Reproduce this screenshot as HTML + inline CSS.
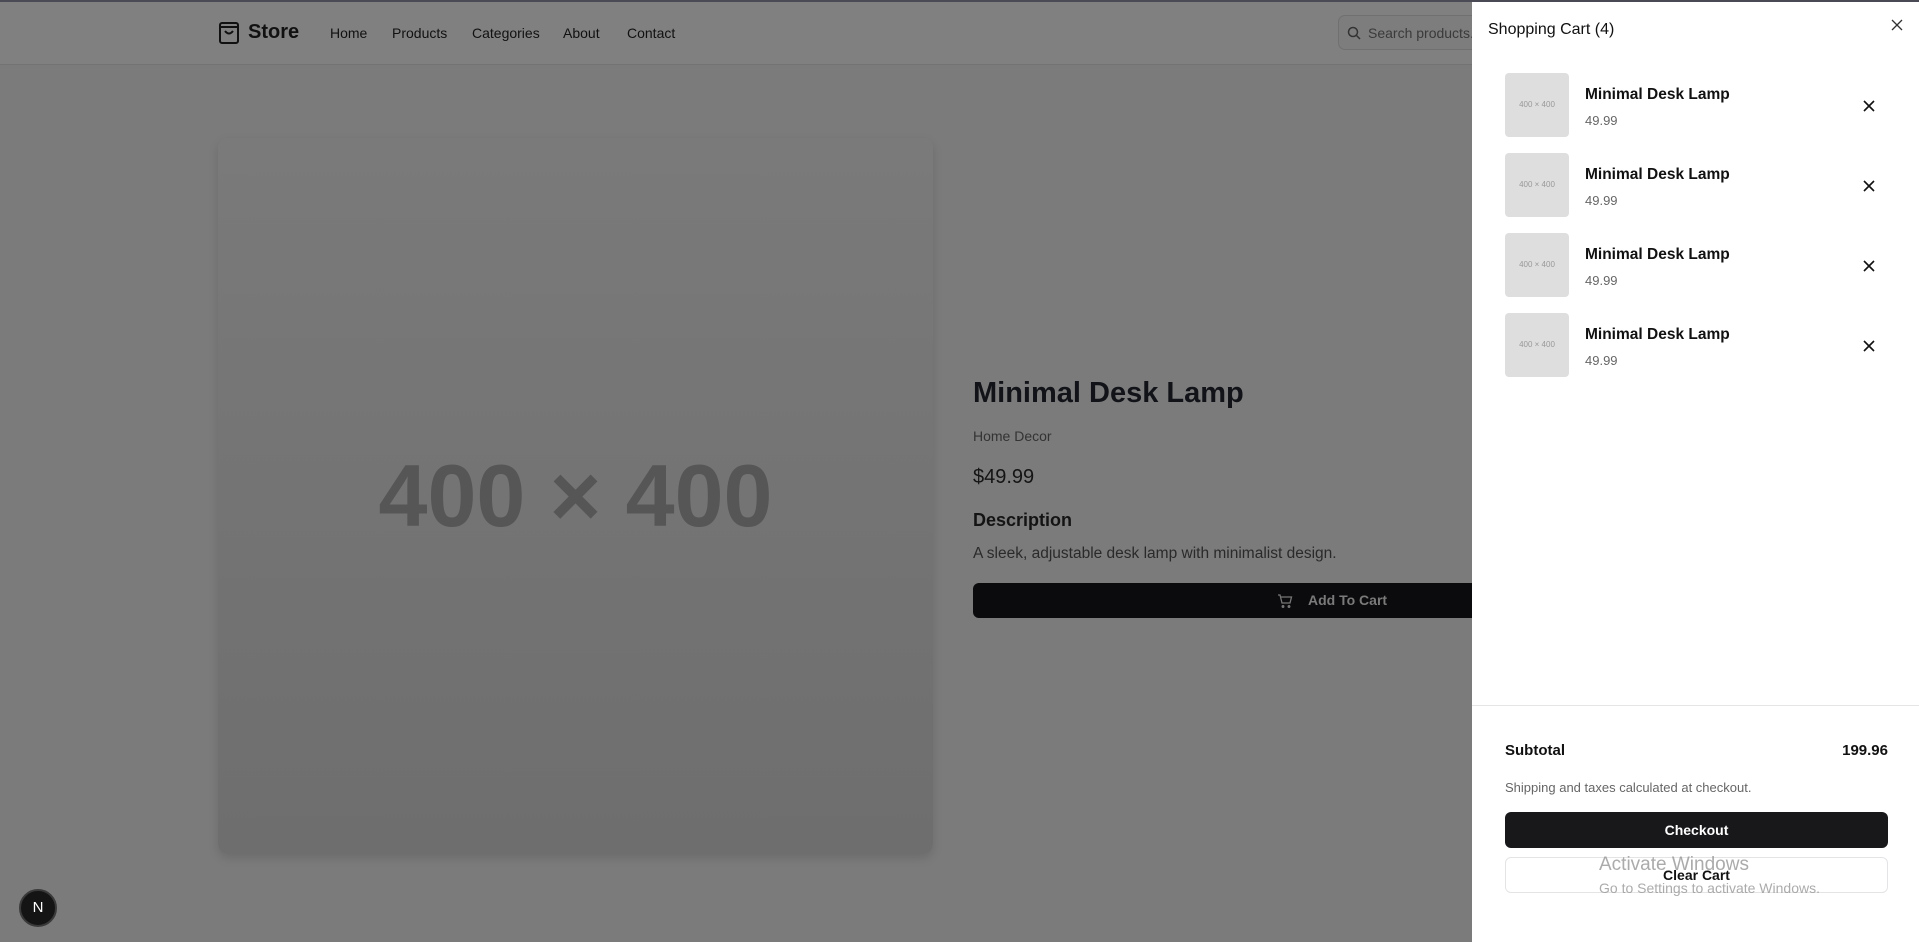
<!DOCTYPE html>
<html><head><meta charset="utf-8"><style>
*{box-sizing:border-box;margin:0;padding:0}
body{width:1919px;height:942px;overflow:hidden;background:#7b7b7b;font-family:"Liberation Sans",sans-serif;position:relative;color:#0a0a0a}
.hdr{position:absolute;left:0;top:0;width:1919px;height:65px;background:#808080;border-top:2px solid #4a4a55;border-bottom:1px solid #737373}
.abs{position:absolute;white-space:nowrap}
.nav{font-size:14px;color:#111;top:25px}
.img{position:absolute;left:218px;top:138px;width:715px;height:716px;border-radius:10px;background:linear-gradient(#7a7a7a,#6e6e6e);box-shadow:0 4px 10px rgba(0,0,0,.12);display:flex;align-items:center;justify-content:center}
.img span{font-size:88px;font-weight:700;color:#565656;line-height:1}
.panel{position:absolute;left:1472px;top:0;width:447px;height:942px;background:#fff;border-top:2px solid #4a4a55}
.thumb{position:absolute;left:33px;width:64px;height:64px;background:#dedede;border-radius:4px;font-size:8px;color:#999;text-align:center;line-height:64px}
.nm{position:absolute;left:113px;font-size:15.5px;color:#111;font-weight:600}
.pr{position:absolute;left:113px;font-size:13px;color:#666}
.x{position:absolute;left:390px;width:14px;height:14px}
</style></head><body>
<div class="hdr"></div>
<svg class="abs" style="left:218px;top:21px" width="22" height="24" viewBox="0 0 22 24" fill="none" stroke="#111" stroke-width="2"><rect x="2" y="2" width="18" height="20" rx="2"/><path d="M2 6h18M7 10q4 5 8 0"/></svg>
<div class="abs" style="left:248px;top:21px;font-size:20px;font-weight:700;color:#111">Store</div>
<div class="abs nav" style="left:330px">Home</div>
<div class="abs nav" style="left:392px">Products</div>
<div class="abs nav" style="left:472px">Categories</div>
<div class="abs nav" style="left:563px">About</div>
<div class="abs nav" style="left:627px">Contact</div>
<div class="abs" style="left:1338px;top:15px;width:200px;height:35px;border:1px solid #707070;border-radius:7px;background:#7d7d7d"></div>
<svg class="abs" style="left:1347px;top:26px" width="14" height="14" viewBox="0 0 14 14" fill="none" stroke="#333" stroke-width="1.5"><circle cx="6" cy="6" r="4.5"/><path d="M9.5 9.5L13 13"/></svg>
<div class="abs" style="left:1368px;top:25px;font-size:14px;color:#3a3a3a">Search products...</div>
<div class="img"><span>400 × 400</span></div>
<div class="abs" style="left:973px;top:377px;font-size:29px;font-weight:700;color:#111318">Minimal Desk Lamp</div>
<div class="abs" style="left:973px;top:428px;font-size:14px;color:#333">Home Decor</div>
<div class="abs" style="left:973px;top:466px;font-size:20px;color:#141414">$49.99</div>
<div class="abs" style="left:973px;top:510px;font-size:18px;font-weight:600;color:#141414">Description</div>
<div class="abs" style="left:973px;top:545px;font-size:15.5px;color:#2a2a2a">A sleek, adjustable desk lamp with minimalist design.</div>
<div class="abs" style="left:973px;top:583px;width:700px;height:35px;background:#0b0b0d;border-radius:6px"></div>
<svg class="abs" style="left:1277px;top:593px" width="16" height="16" viewBox="0 0 16 16" fill="none" stroke="#777" stroke-width="1.3"><path d="M1 2h2l2 8h8l1.5-6H4"/><circle cx="6" cy="13.5" r=".8"/><circle cx="12" cy="13.5" r=".8"/></svg>
<div class="abs" style="left:1308px;top:592px;font-size:14px;font-weight:700;color:#7a7a7a">Add To Cart</div>
<div class="abs" style="left:19px;top:889px;width:38px;height:38px;border-radius:50%;background:#141414;border:2px solid #3a3a3a;color:#fff;font-size:15px;text-align:center;line-height:34px">N</div>
<div class="panel">
<div class="abs" style="left:16px;top:19px;font-size:16px;color:#111">Shopping Cart (4)</div>
<svg class="abs" style="left:419px;top:17px" width="12" height="12" viewBox="0 0 12 12" stroke="#333" stroke-width="1.3"><path d="M1 1l10 10M11 1L1 11"/></svg>
<div class="thumb" style="top:71px">400 × 400</div><div class="nm" style="top:84px">Minimal Desk Lamp</div><div class="pr" style="top:111px">49.99</div><svg class="x" style="top:97px" viewBox="0 0 14 14" stroke="#111" stroke-width="1.6"><path d="M2 2l10 10M12 2L2 12"/></svg>
<div class="thumb" style="top:151px">400 × 400</div><div class="nm" style="top:164px">Minimal Desk Lamp</div><div class="pr" style="top:191px">49.99</div><svg class="x" style="top:177px" viewBox="0 0 14 14" stroke="#111" stroke-width="1.6"><path d="M2 2l10 10M12 2L2 12"/></svg>
<div class="thumb" style="top:231px">400 × 400</div><div class="nm" style="top:244px">Minimal Desk Lamp</div><div class="pr" style="top:271px">49.99</div><svg class="x" style="top:257px" viewBox="0 0 14 14" stroke="#111" stroke-width="1.6"><path d="M2 2l10 10M12 2L2 12"/></svg>
<div class="thumb" style="top:311px">400 × 400</div><div class="nm" style="top:324px">Minimal Desk Lamp</div><div class="pr" style="top:351px">49.99</div><svg class="x" style="top:337px" viewBox="0 0 14 14" stroke="#111" stroke-width="1.6"><path d="M2 2l10 10M12 2L2 12"/></svg>
<div class="abs" style="left:0;top:703px;width:447px;height:1px;background:#e5e5e5"></div>
<div class="abs" style="left:33px;top:740px;font-size:15px;font-weight:600;color:#111">Subtotal</div>
<div class="abs" style="right:31px;top:740px;font-size:15px;font-weight:600;color:#111">199.96</div>
<div class="abs" style="left:33px;top:778px;font-size:13px;color:#666">Shipping and taxes calculated at checkout.</div>
<div class="abs" style="left:33px;top:810px;width:383px;height:36px;background:#18181b;border-radius:6px;color:#fff;font-size:14px;font-weight:700;text-align:center;line-height:36px">Checkout</div>
<div class="abs" style="left:33px;top:855px;width:383px;height:36px;border:1px solid #e4e4e7;border-radius:6px;color:#111;font-size:14px;font-weight:600;text-align:center;line-height:34px">Clear Cart</div>
<div class="abs" style="left:127px;top:852px;font-size:19px;color:rgba(150,150,150,.8)">Activate Windows</div>
<div class="abs" style="left:127px;top:878px;font-size:14px;color:rgba(150,150,150,.8)">Go to Settings to activate Windows.</div>
</div>
</body></html>
